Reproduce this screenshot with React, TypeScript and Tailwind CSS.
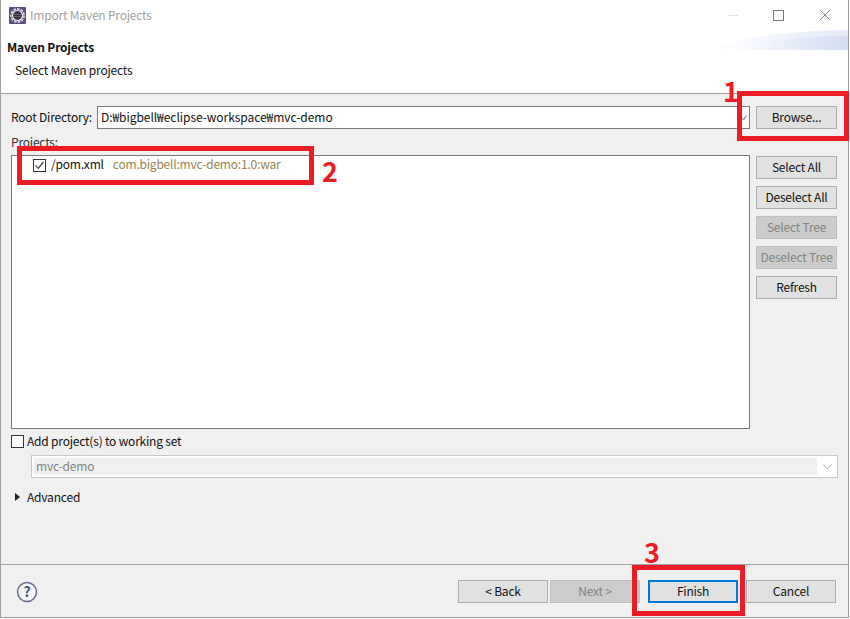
const font = { fontFamily: '"Noto Sans CJK KR", "Noto Sans", sans-serif' };

function Btn({
  label,
  disabled,
  focused,
  className = '',
}: {
  label: string;
  disabled?: boolean;
  focused?: boolean;
  className?: string;
}) {
  const look = disabled
    ? 'border bg-[#cccccc] border-[#bfbfbf] text-[#838383]'
    : focused
      ? 'border-2 bg-[#e1e1e1] border-[#0078d7] text-[#111111]'
      : 'border bg-[#e1e1e1] border-[#adadad] text-[#111111]';
  return (
    <div className={`h-[23px] flex items-center justify-center pb-[2px] text-[12px] leading-none tracking-[-0.2px] ${look} ${className}`}>
      {label}
    </div>
  );
}

function Chevron({ color, width }: { color: string; width: number }) {
  return (
    <svg width={width} height="6" viewBox={`0 0 ${width} 6`}>
      <path d={`M0.5 0.5 L${width / 2} 5 L${width - 0.5} 0.5`} fill="none" stroke={color} strokeWidth="1" />
    </svg>
  );
}

function EclipseIcon() {
  return (
    <svg width="17" height="17" viewBox="0 0 17 17">
      <rect x="0" y="0" width="17" height="17" rx="1" fill="#5d4c7f" />
      <circle cx="8.5" cy="8.5" r="6.6" fill="none" stroke="#dcdce2" strokeWidth="1.6" strokeDasharray="2.6 1.2" />
      <circle cx="8.5" cy="8.5" r="5.6" fill="#ececf0" />
      <circle cx="8.5" cy="8.5" r="4.4" fill="#35313e" />
      <path d="M4.6 7.4h7.8M4.6 9.6h7.8" stroke="#77727f" strokeWidth="0.7" />
    </svg>
  );
}

function Banner() {
  return (
    <svg className="absolute right-0 top-0" width="141" height="20" viewBox="0 0 141 20">
      <defs>
        <linearGradient id="bannerFade" x1="0" y1="0" x2="1" y2="0">
          <stop offset="0" stopColor="#ffffff" />
          <stop offset="1" stopColor="#d3dcf3" />
        </linearGradient>
        <linearGradient id="bannerTop" x1="0" y1="0" x2="1" y2="0">
          <stop offset="0" stopColor="#ffffff" />
          <stop offset="1" stopColor="#e4eaf8" />
        </linearGradient>
      </defs>
      <path d="M0 20 C30 8 80 1 141 0 V20 Z" fill="url(#bannerTop)" />
      <path d="M20 20 C50 11 90 6 141 6 V20 Z" fill="url(#bannerFade)" />
    </svg>
  );
}

export default function App() {
  return (
    <div className="relative w-[850px] h-[619px] bg-white overflow-hidden" style={font}>
      <div className="relative w-[849px] h-[618px] border-l border-r border-b border-[#a0a0a0] flex flex-col text-[12px] tracking-[-0.2px] text-[#111111]">
        {/* Title bar */}
        <div className="h-[30px] flex items-center pl-[8px] pr-[18px] shrink-0">
          <EclipseIcon />
          <span className="ml-[4px] text-[#a3a3a3] text-[12px]">Import Maven Projects</span>
          <div className="ml-auto flex items-center gap-[35px]">
            <div className="w-[10px] h-px bg-[#e3e3e3]" />
            <div className="w-[11px] h-[11px] border border-[#7a7a7a]" />
            <svg width="10" height="10" viewBox="0 0 10 10" className="ml-px">
              <path d="M0 0 L10 10 M10 0 L0 10" stroke="#8a8a8a" strokeWidth="1" />
            </svg>
          </div>
        </div>

        {/* Header */}
        <div className="relative h-[64px] shrink-0 pl-[6px] border-b border-[#a0a0a0]">
          <Banner />
          <div className="relative font-bold leading-[16px] pt-[9px]">Maven Projects</div>
          <div className="leading-[16px] pl-[8px] pt-[7px]">Select Maven projects</div>
        </div>

        {/* Body */}
        <div className="flex-1 bg-[#f0f0f0] flex flex-col pt-[12px] pl-[10px] pr-[11px]">
          <div className="flex items-center h-[23px]">
            <span className="w-[86px] pb-[2px]">Root Directory:</span>
            <div className="w-[653px] h-[23px] bg-white border border-[#7a7a7a] flex items-center pl-[3px] pr-[2px]">
              <span className="flex-1 pb-[2px] tracking-[-0.05px]">D:₩bigbell₩eclipse-workspace₩mvc-demo</span>
              <Chevron color="#777777" width={7} />
            </div>
            <Btn label="Browse..." className="w-[81px] ml-[6px]" />
          </div>

          <div className="h-[16px] mt-[5px] mb-[5px] leading-[16px] text-[#333333]">Projects:</div>

          <div className="flex h-[274px]">
            <div className="w-[739px] h-full bg-white border border-[#7a7a7a] pl-[21px] pt-px">
              <div className="flex items-center h-[16px]">
                <div className="w-[13px] h-[13px] border border-[#333333] flex items-center justify-center">
                  <svg width="11" height="11" viewBox="0 0 11 11">
                    <path d="M1.5 5.5 L4.3 8.3 L9.5 2" fill="none" stroke="#555555" strokeWidth="1.4" />
                  </svg>
                </div>
                <span className="ml-[5px] pb-[2px]">/pom.xml</span>
                <span className="ml-[9px] pb-[2px] text-[#95834f]">com.bigbell:mvc-demo:1.0:war</span>
              </div>
            </div>
            <div className="ml-[6px] w-[81px] flex flex-col gap-[7px] pt-px">
              <Btn label="Select All" />
              <Btn label="Deselect All" />
              <Btn label="Select Tree" disabled />
              <Btn label="Deselect Tree" disabled />
              <Btn label="Refresh" />
            </div>
          </div>

          <div className="flex items-center h-[16px] mt-[4px]">
            <div className="w-[13px] h-[13px] bg-white border border-[#333333]" />
            <span className="ml-[3px]">Add project(s) to working set</span>
          </div>

          <div className="ml-[20px] mt-[6px] w-[807px] h-[23px] bg-white border border-[#c8c8c8] flex items-center pl-[2px] pr-[5px]">
            <div className="flex-1 h-[17px] bg-[#f0f0f0] flex items-center pl-[2px] pb-[2px] mr-[6px] text-[#838383]">mvc-demo</div>
            <Chevron color="#a8a8a8" width={9} />
          </div>

          <div className="flex items-center h-[16px] mt-[11px]">
            <svg width="5" height="8" viewBox="0 0 5 8" className="ml-[4px]">
              <path d="M0 0 L5 4 L0 8 Z" fill="#222222" />
            </svg>
            <span className="ml-[7px]">Advanced</span>
          </div>

          {/* Button bar */}
          <div className="mt-auto -ml-[10px] -mr-[11px] h-[53px] border-t border-[#a0a0a0] flex items-center pl-[15px] pr-[12px] pt-px">
            <svg width="22" height="22" viewBox="0 0 22 22">
              <circle cx="11" cy="11" r="9.5" fill="#f4f6f9" stroke="#66718a" strokeWidth="1.5" />
              <text x="11" y="16" textAnchor="middle" fontSize="14" fontWeight="700" fill="#4c5872" style={font}>?</text>
            </svg>
            <div className="ml-auto flex items-center">
              <Btn label="< Back" className="w-[90px]" />
              <Btn label="Next >" disabled className="w-[90px] ml-[2px]" />
              <Btn label="Finish" focused className="w-[90px] ml-[8px]" />
              <Btn label="Cancel" className="w-[90px] ml-[8px]" />
            </div>
          </div>
        </div>
      </div>

      {/* Red annotations drawn over the screenshot */}
      <div className="absolute left-[737px] top-[91px] w-[112px] h-[50px] border-[5px] border-[#ed1c24]" />
      <div className="absolute left-[17px] top-[146px] w-[297px] h-[39px] border-[5px] border-[#ed1c24]" />
      <div className="absolute left-[632px] top-[565px] w-[113px] h-[51px] border-[5px] border-[#ed1c24]" />
      <div className="absolute left-[723px] top-[74px] text-[27px] leading-[34px] font-bold text-[#ed1c24]">1</div>
      <div className="absolute left-[322px] top-[154px] text-[27px] leading-[34px] font-bold text-[#ed1c24]">2</div>
      <div className="absolute left-[644px] top-[535px] text-[27px] leading-[34px] font-bold text-[#ed1c24]">3</div>
    </div>
  );
}
